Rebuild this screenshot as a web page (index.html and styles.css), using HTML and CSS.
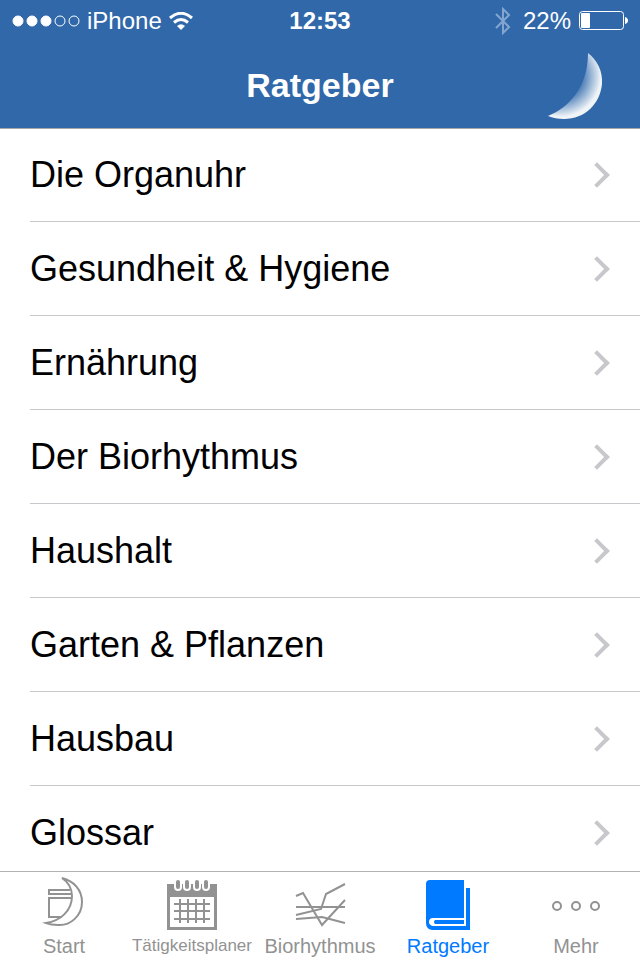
FILE: index.html
```html
<!doctype html>
<html lang="de">
<head>
  <meta charset="UTF-8">
  <meta name="viewport" content="width=device-width, initial-scale=1">
  <title>Ratgeber</title>
  <link rel="stylesheet" href="styles.css">
</head>
<body>
<header class="header">
  <div class="status">
    <div class="status-left">
      <svg class="signal" width="68" height="12" viewBox="0 0 68 12" fill="#fff" stroke="#fff">
        <circle cx="6" cy="6" r="5"/>
        <circle cx="20" cy="6" r="5"/>
        <circle cx="34" cy="6" r="5"/>
        <circle cx="48" cy="6" r="5" fill="none"/>
        <circle cx="62" cy="6" r="5" fill="none"/>
      </svg>
      <span>iPhone</span>
      <svg width="24" height="18" viewBox="0 0 24 18" fill="none" stroke="#fff" stroke-width="3">
        <path d="M1 6Q12 -3.500 23 6M5 10.500Q12 4.500 19 10.500"/>
        <path d="M8 14Q12 10.500 16 14L12 18Z" fill="#fff" stroke="none"/>
      </svg>
    </div>
    <time class="clock">12:53</time>
    <div class="status-right">
      <svg class="bluetooth" width="16" height="28" viewBox="0 0 16 28" fill="none" stroke="#83a5cf" stroke-width="2">
        <path d="M1 7L14 20L8 26V2L14 8L1 21"/>
      </svg>
      <span>22%</span>
      <svg width="49" height="20" viewBox="0 0 49 20">
        <rect x=".5" y=".5" width="44" height="18" rx="3" fill="none" stroke="#fff"/>
        <rect x="2" y="2" width="9" height="15" rx="1" fill="#fff"/>
        <path d="M46 6Q49 7 49 9.500T46 13Z" fill="#fff"/>
      </svg>
    </div>
  </div>
  <div class="navbar">
    <h1>Ratgeber</h1>
    <svg class="moon" width="60" height="70" viewBox="0 0 60 70">
      <defs>
        <radialGradient id="moonlight" gradientUnits="userSpaceOnUse" cx="16" cy="26" r="43">
          <stop offset=".5" stop-color="#dfe9f3" stop-opacity=".1"/>
          <stop offset=".75" stop-color="#dfe9f3" stop-opacity=".65"/>
          <stop offset=".95" stop-color="#f0f4f8"/>
        </radialGradient>
        <filter id="soft"><feGaussianBlur stdDeviation=".7"/></filter>
      </defs>
      <path d="M44 3C53 10 59 21 58 34C56 54 41 69 20 69Q11 69 4 66C24 58 44 38 44 3Z" fill="url(#moonlight)" filter="url(#soft)"/>
    </svg>
  </div>
</header>

<main class="content">
  <ul class="list">
    <li><a href="#organuhr">Die Organuhr</a></li>
    <li><a href="#gesundheit">Gesundheit &amp; Hygiene</a></li>
    <li><a href="#ernaehrung">Ernährung</a></li>
    <li><a href="#biorhythmus">Der Biorhythmus</a></li>
    <li><a href="#haushalt">Haushalt</a></li>
    <li><a href="#garten">Garten &amp; Pflanzen</a></li>
    <li><a href="#hausbau">Hausbau</a></li>
    <li><a href="#glossar">Glossar</a></li>
  </ul>
</main>

<nav class="tabbar">
  <a class="tab" href="#start">
    <svg width="60" height="56" viewBox="0 0 60 56" fill="none" stroke="currentColor" stroke-width="2">
      <path d="M28 2C40 5 48 14 48 26C48 40 36 50 24 49Q17 49 12 47C26 45 38 35 38 20C38 12 34 6 28 2Z"/>
      <path d="M36 14H15V18H37M38 22H15V41H28"/>
    </svg>
    <span>Start</span>
  </a>
  <a class="tab" href="#planer">
    <svg width="60" height="56" viewBox="0 0 60 56" fill="none" stroke="currentColor">
      <path d="M5 8H55V54H5ZM8 21V51H52V21Z" fill="currentColor" fill-rule="evenodd" stroke="none"/>
      <path d="M12 28H48M12 35H48M12 43H48M18 23V47M26 23V47M34 23V47M42 23V47" stroke-width="2"/>
      <g stroke-linecap="round">
        <path d="M16 6V11M25 6V11M35 6V11M44 6V11" stroke="#fff" stroke-width="8"/>
        <path d="M16 6V11M25 6V11M35 6V11M44 6V11" stroke-width="4"/>
      </g>
    </svg>
    <span class="long">Tätigkeitsplaner</span>
  </a>
  <a class="tab" href="#rhythmus">
    <svg width="60" height="56" viewBox="0 0 60 56" fill="none" stroke="currentColor" stroke-width="2">
      <path d="M6 20L13 17L32 49L55 24"/>
      <path d="M6 39L31 33L36 18L55 8"/>
      <path d="M6 43L32 41L55 47"/>
      <path d="M6 31H55"/>
    </svg>
    <span>Biorhythmus</span>
  </a>
  <a class="tab active" href="#ratgeber" aria-current="page">
    <svg width="60" height="56" viewBox="0 0 60 56" fill="currentColor">
      <path d="M12 4H46V42H15Q11 42 11 46Q11 49 15 50H48V12H52V54H14Q8 53 8 47V8Q8 4 12 4Z"/>
      <path d="M17 44H46V48H17Q15 46 17 44Z"/>
    </svg>
    <span>Ratgeber</span>
  </a>
  <a class="tab" href="#mehr">
    <svg width="60" height="56" viewBox="0 0 60 56" fill="none" stroke="currentColor" stroke-width="2">
      <circle cx="11" cy="30" r="4"/>
      <circle cx="30" cy="30" r="4"/>
      <circle cx="49" cy="30" r="4"/>
    </svg>
    <span>Mehr</span>
  </a>
</nav>
</body>
</html>
```
FILE: styles.css
```css
*,
*::after {
  box-sizing: border-box;
}
body {
  display: flex;
  flex-direction: column;
  height: 100vh;
  margin: 0;
  font-family: "Liberation Sans", Arial, sans-serif;
  background: #fff;
  color: #000;
}
a {
  color: inherit;
  text-decoration: none;
}
.header {
  flex: none;
  background: #3068aa;
  color: #fff;
  border-bottom: 1px solid #a7a7aa;
}
.status {
  display: grid;
  grid-template-columns: 1fr auto 1fr;
  align-items: center;
  height: 42px;
  padding: 0 12px;
  font-size: 24px;
}
.status-left,
.status-right {
  display: flex;
  align-items: center;
  gap: 8px;
}
.status-left {
  gap: 7px;
}
.status-right {
  justify-content: flex-end;
}
.bluetooth {
  margin-right: 4px;
}
.clock {
  font-weight: bold;
}
.navbar {
  display: grid;
  grid-template-columns: 1fr auto 1fr;
  align-items: center;
  height: 86px;
  padding: 0 36px;
}
.navbar h1 {
  grid-column: 2;
  margin: 0;
  font-size: 34px;
}
.moon {
  justify-self: end;
}
.content {
  flex: 1;
  min-height: 0;
  overflow: hidden;
}
.list {
  margin: 0;
  padding: 0 0 0 30px;
  list-style: none;
}
.list a {
  display: flex;
  align-items: center;
  justify-content: space-between;
  height: 94px;
  padding-right: 34px;
  border-bottom: 1px solid #c8c7cc;
  font-size: 36px;
}
.list li:first-child a {
  height: 93px;
}
.list a::after {
  content: "";
  width: 18px;
  height: 18px;
  border: solid #c7c7cc;
  border-width: 4px 4px 0 0;
  transform: rotate(45deg);
}
.tabbar {
  display: flex;
  flex: none;
  border-top: 1px solid #b2b2b2;
  padding-top: 4px;
  color: #929292;
}
.tab {
  display: flex;
  flex: 1 1 0;
  min-width: 0;
  flex-direction: column;
  align-items: center;
  font-size: 20px;
  line-height: 28px;
}
.tab .long {
  font-size: 17px;
}
.tab.active {
  color: #007aff;
}
```
